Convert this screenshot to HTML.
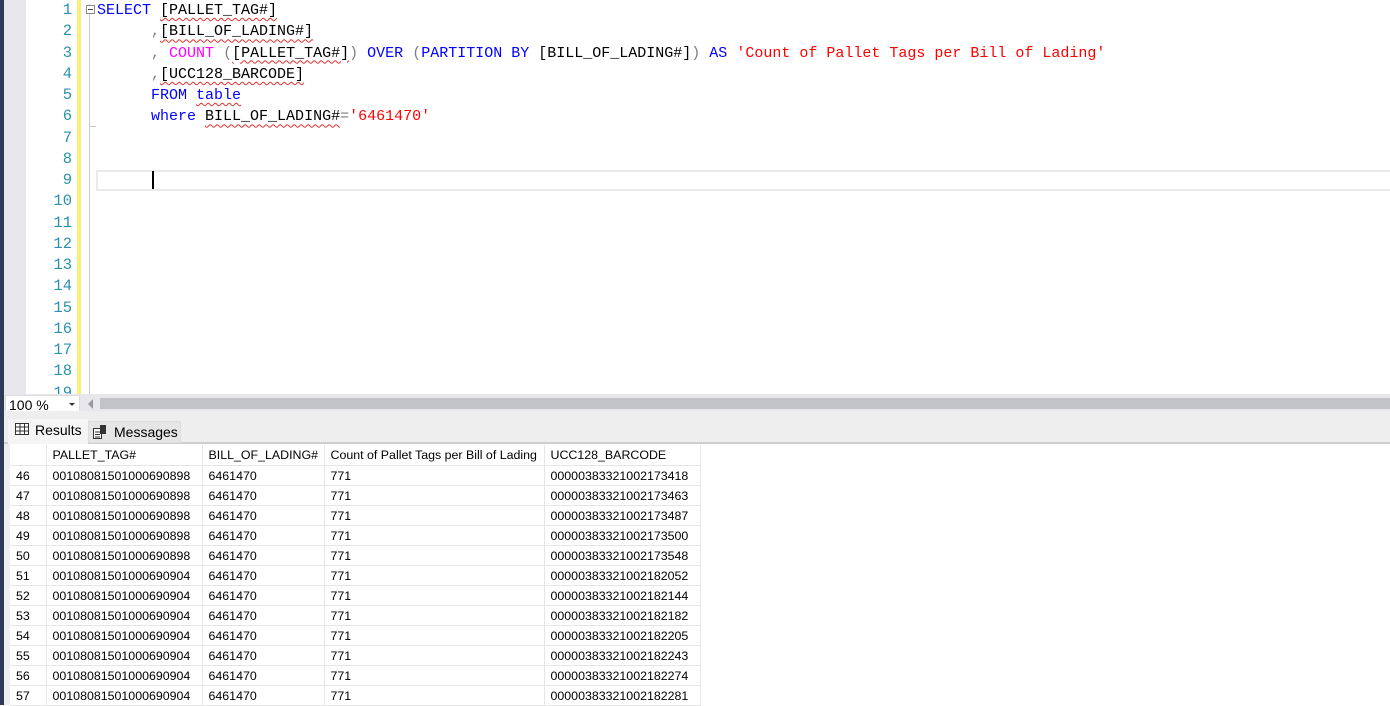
<!DOCTYPE html>
<html><head><meta charset="utf-8"><style>
*{margin:0;padding:0;box-sizing:border-box}
body{width:1390px;height:705px;overflow:hidden;background:#fff;position:relative;font-family:"Liberation Sans",sans-serif}
.abs{position:absolute}
.code{font-family:"Liberation Mono",monospace;font-size:15px;line-height:21.25px;white-space:pre}
.ln{left:26px;width:46px;text-align:right;color:#2b91af;top:0px;font-size:15.5px}
.txt{left:97px;top:0px;color:#000}
.k{color:#0000ff}.g{color:#808080}.f{color:#ff00ff}.s{color:#ff0000}
.sq{text-decoration:underline wavy #e03030;text-decoration-thickness:1px;text-underline-offset:3px}
table{border-collapse:collapse;font-size:12.4px;color:#000}
td{height:20px;border-right:1px solid #e6e6e6;border-bottom:1px solid #e6e6e6;padding:1px 0 0 6px;white-space:nowrap}
</style></head><body>
<div class="abs" style="left:0;top:0;width:4px;height:705px;background:#2d3b57"></div>
<div class="abs" style="left:4px;top:0;width:22px;height:395px;background:#e8e8ec"></div>
<div class="abs" style="left:77px;top:0;width:4px;height:395px;background:#fbef7a"></div>
<div class="abs" style="left:89px;top:4px;width:1px;height:390px;background:#c8c8c8"></div>
<div class="abs" style="left:86px;top:5px;width:9px;height:9px;border:1px solid #888;background:#fff"></div>
<div class="abs" style="left:88px;top:9px;width:5px;height:1px;background:#444"></div>
<div class="abs" style="left:90px;top:126px;width:6px;height:1px;background:#c8c8c8"></div>
<div class="abs" style="left:96px;top:170px;width:1300px;height:21px;border:2px solid #eaeaea"></div>
<div class="abs" style="left:152px;top:171px;width:2px;height:18px;background:#000"></div>
<div class="abs code ln">1
2
3
4
5
6
7
8
9
10
11
12
13
14
15
16
17
18
19</div>
<div class="abs code txt"><span class="k">SELECT</span> <span class="sq">[PALLET_TAG#]</span>
      <span class="g">,</span><span class="sq">[BILL_OF_LADING#]</span>
      <span class="g">,</span> <span class="f">COUNT</span> <span class="g">(</span><span class="sq">[PALLET_TAG#]</span><span class="g">)</span> <span class="k">OVER</span> <span class="g">(</span><span class="k">PARTITION BY</span> [BILL_OF_LADING#]<span class="g">)</span> <span class="k">AS</span> <span class="s">'Count of Pallet Tags per Bill of Lading'</span>
      <span class="g">,</span><span class="sq">[UCC128_BARCODE]</span>
      <span class="k">FROM</span> <span class="k sq">table</span>
      <span class="k">where</span> <span class="sq">BILL_OF_LADING#</span><span class="g">=</span><span class="s">'6461470'</span></div>
<div class="abs" style="left:4px;top:394px;width:1386px;height:17px;background:#e8e8ec"></div>
<div class="abs" style="left:5px;top:395px;width:75px;height:20px;background:#fff;border:1px solid #ddd;font-size:14px;padding:1px 0 0 3px">100 %</div>
<div class="abs" style="left:69px;top:403px;border-left:3px solid transparent;border-right:3px solid transparent;border-top:3px solid #333"></div>
<div class="abs" style="left:88px;top:399px;border-top:5px solid transparent;border-bottom:5px solid transparent;border-right:5px solid #999"></div>
<div class="abs" style="left:100px;top:398px;width:1290px;height:11px;background:#c2c3c9"></div>
<div class="abs" style="left:4px;top:411px;width:1386px;height:33px;background:#eeeeee;border-bottom:2px solid #cfcfcf"></div>
<div class="abs" style="left:8px;top:419px;width:80px;height:25px;background:#f5f5f5;font-size:14px;padding:3px 0 0 27px">Results</div>
<svg class="abs" style="left:15px;top:423px" width="14" height="12"><rect x="0.5" y="0.5" width="13" height="11" fill="#fff" stroke="#333"/><path d="M0 4H14M0 8H14M5 0V12M9.5 0V12" stroke="#333"/></svg>
<div class="abs" style="left:88px;top:421px;width:93px;height:22px;background:#e6e6e6;border:1px solid #ddd;font-size:14px;padding:2px 0 0 25px">Messages</div>
<svg class="abs" style="left:93px;top:425px" width="14" height="14"><rect x="0.5" y="3.5" width="8" height="10" fill="#fff" stroke="#333"/><path d="M2 7H7M2 9.5H7M2 12H7" stroke="#333"/><rect x="7" y="0" width="6" height="9" fill="#333"/></svg>
<div class="abs" style="left:4px;top:444px;width:6px;height:261px;background:#eee"></div>
<table class="abs" style="left:10px;top:445px">
<tr><td style="width:36px"></td><td style="width:156px">PALLET_TAG#</td><td style="width:122px">BILL_OF_LADING#</td><td style="width:220px">Count of Pallet Tags per Bill of Lading</td><td style="width:156px">UCC128_BARCODE</td></tr>
<tr><td>46</td><td>00108081501000690898</td><td>6461470</td><td>771</td><td>00000383321002173418</td></tr>
<tr><td>47</td><td>00108081501000690898</td><td>6461470</td><td>771</td><td>00000383321002173463</td></tr>
<tr><td>48</td><td>00108081501000690898</td><td>6461470</td><td>771</td><td>00000383321002173487</td></tr>
<tr><td>49</td><td>00108081501000690898</td><td>6461470</td><td>771</td><td>00000383321002173500</td></tr>
<tr><td>50</td><td>00108081501000690898</td><td>6461470</td><td>771</td><td>00000383321002173548</td></tr>
<tr><td>51</td><td>00108081501000690904</td><td>6461470</td><td>771</td><td>00000383321002182052</td></tr>
<tr><td>52</td><td>00108081501000690904</td><td>6461470</td><td>771</td><td>00000383321002182144</td></tr>
<tr><td>53</td><td>00108081501000690904</td><td>6461470</td><td>771</td><td>00000383321002182182</td></tr>
<tr><td>54</td><td>00108081501000690904</td><td>6461470</td><td>771</td><td>00000383321002182205</td></tr>
<tr><td>55</td><td>00108081501000690904</td><td>6461470</td><td>771</td><td>00000383321002182243</td></tr>
<tr><td>56</td><td>00108081501000690904</td><td>6461470</td><td>771</td><td>00000383321002182274</td></tr>
<tr><td>57</td><td>00108081501000690904</td><td>6461470</td><td>771</td><td>00000383321002182281</td></tr>
</table>
</body></html>
